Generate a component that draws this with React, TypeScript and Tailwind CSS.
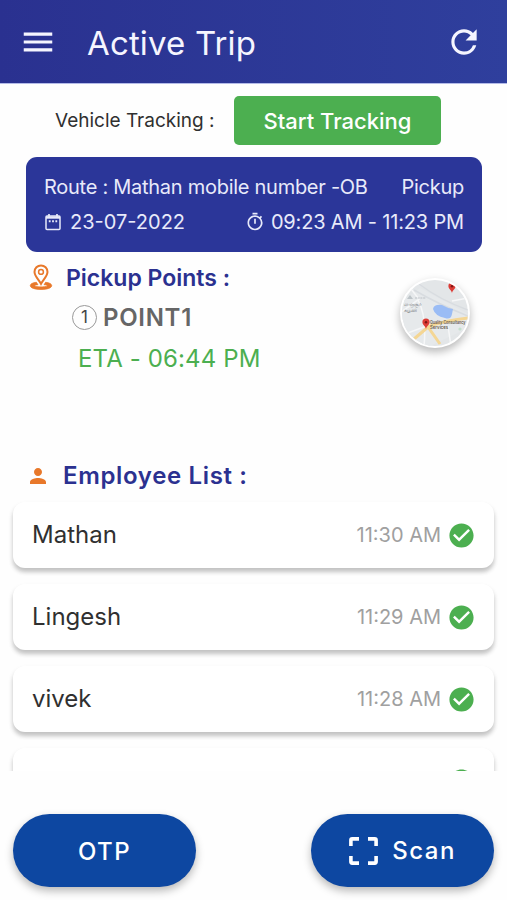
import React from "react";
import { MdCheckCircle, MdMenu, MdOutlineTimer, MdPerson, MdRefresh } from "react-icons/md";

interface Employee {
  name: string;
  time: string;
}

const employees: Employee[] = [
  { name: "Mathan", time: "11:30 AM" },
  { name: "Lingesh", time: "11:29 AM" },
  { name: "vivek", time: "11:28 AM" },
  { name: "", time: "" },
];

function CalendarIcon() {
  return (
    <svg className="h-[18px] w-[16px] shrink-0" viewBox="0 0 16 18" fill="none" stroke="currentColor">
      <rect x="1" y="3" width="14" height="13.5" rx="1" strokeWidth="1.5" />
      <path d="M1 4.5h14" strokeWidth="2.4" />
      <path d="M4 1v3M12 1v3" strokeWidth="1.7" />
      <path d="M3.8 8.2h1.8M7.1 8.2h1.8M10.4 8.2h1.8" strokeWidth="2" />
    </svg>
  );
}

function PinIcon() {
  return (
    <svg className="h-[27px] w-[24px] shrink-0" viewBox="0 0 24 27" fill="none" stroke="#e8782a">
      <path d="M12 19.8C10 15.8 5.5 12 5.5 7.9a6.5 6.5 0 0 1 13 0C18.5 12 14 15.8 12 19.8Z" strokeWidth="2" />
      <circle cx="12" cy="7.9" r="2.4" strokeWidth="1.5" />
      <path d="M7.4 18.3C3.9 18.8 1.3 19.8 1.3 21.7c0 2.3 4.8 3.7 10.7 3.7s10.7-1.4 10.7-3.7c0-1.9-2.6-2.9-6.1-3.4l-1.5 2.4c2 .1 3.2.5 3.2 1 0 .7-2.8 1.2-6.3 1.2s-6.3-.5-6.3-1.2c0-.5 1.2-.9 3.2-1Z" fill="#e8782a" strokeWidth="0.8" />
    </svg>
  );
}

function ScanIcon() {
  return (
    <svg className="h-[28px] w-[29px] shrink-0" viewBox="0 0 29 28" fill="none" stroke="white" strokeWidth="3.6">
      <path d="M1.9 9V3.2Q1.9 1.9 3.2 1.9H10M19 1.9h6.8q1.3 0 1.3 1.3V9M27.1 19v5.8q0 1.3-1.3 1.3H19M10 26.1H3.2q-1.3 0-1.3-1.3V19" />
    </svg>
  );
}

function MapPin({ x, y }: { x: number; y: number }) {
  return (
    <g transform={`translate(${x} ${y})`}>
      <path d="M0 0C-.5-3.2-3.6-4-3.6-7a3.6 3.6 0 0 1 7.2 0C3.6-4 .5-3.2 0 0Z" fill="#dc3b35" />
      <circle cy="-6.8" r="1.2" fill="#7d1512" />
    </g>
  );
}

function MapThumbnail() {
  return (
    <button
      type="button"
      aria-label="Open map"
      className="h-[70px] w-[70px] shrink-0 overflow-hidden rounded-full border-[2px] border-white bg-white shadow-[0_4px_8px_rgba(0,0,0,0.28)]"
    >
      <svg className="h-full w-full" viewBox="0 0 66 66">
        <rect width="66" height="66" fill="#e3e6e8" />
        <path d="M0 22 18 8 66 34v14L28 66H0Z" fill="#e6e9eb" />
        <path d="M17 4Q38 20 66 30M12 10Q36 24 66 36" stroke="#d8dce0" strokeWidth="1.5" fill="none" />
        <path d="M-2 33 17 19 9 9M16 20Q25 37 22 66M22 47 0 55M46 46 49 66M50 21 66 18" stroke="#f6f7f8" strokeWidth="1.5" fill="none" />
        <path d="M31 29q1-5 9-4 5 3 11 4l-1 5q-1 6-7 4-10-2-12-9Z" fill="#9abcf5" />
        <path d="M12 59 26 47l12 17M26 47Q40 41 66 38" stroke="#f4d694" strokeWidth="3" fill="none" />
        <path d="m5 19 3-4 3 4Z" fill="#bcc3c7" />
        <path d="M13 18h11" stroke="#bcc1c5" strokeWidth="1.2" strokeDasharray="2 .7" />
        <text x="2" y="26" fontSize="4.6" fill="#7b8085">ளஞ்சூர்</text>
        <text x="2" y="32" fontSize="4.6" fill="#666b70">கழனி</text>
        <text x="28" y="44" fontSize="4.3" fontWeight="600" fill="#66594c" textLength="35.5" lengthAdjust="spacingAndGlyphs">Quality Consultancy</text>
        <text x="28" y="49" fontSize="4.3" fontWeight="600" fill="#66594c">Services</text>
        <circle cx="58" cy="49" r="1.6" fill="#c4dfcd" />
        <MapPin x={50} y={13} />
        <MapPin x={24} y={49} />
      </svg>
    </button>
  );
}

function EmployeeCard({ name, time }: Employee) {
  return (
    <div className="flex h-[66px] shrink-0 items-center justify-between rounded-[12px] bg-white pr-[18px] pl-[19px] shadow-[0_4px_4px_rgba(0,0,0,0.2),0_3px_6px_rgba(0,0,0,0.06)]">
      <span className="text-[24px] text-[#303030]">{name}</span>
      <div className="flex items-center gap-[6px]">
        <span className="text-[20px] text-[#a0a0a0]">{time}</span>
        <MdCheckCircle className="h-[29px] w-[29px] text-[#4caf50]" />
      </div>
    </div>
  );
}

export default function App() {
  return (
    <div className="flex h-[900px] w-[507px] flex-col overflow-hidden bg-[#fefefe] font-['Inter','Noto_Sans',sans-serif] leading-none">
      <header className="flex h-[84px] shrink-0 items-center border-b border-[#b4bbe8] bg-linear-to-r from-[#2a3190] to-[#2f3f9d] pr-[24px] pl-[19px] text-[#f5f5ff]">
        <MdMenu className="h-[38px] w-[38px]" />
        <h1 className="ml-[30px] pt-[4px] text-[33px] tracking-[0.15px]">Active Trip</h1>
        <MdRefresh className="ml-auto h-[38px] w-[38px]" />
      </header>

      <div className="mt-[12px] flex h-[49px] shrink-0 items-center pl-[55px]">
        <span className="w-[179px] text-[19px] whitespace-nowrap text-[#303030]">Vehicle Tracking :</span>
        <button type="button" className="h-[49px] w-[207px] rounded-[5px] bg-[#4caf50] text-[22px] font-medium text-white">
          Start Tracking
        </button>
      </div>

      <section className="mr-[25px] ml-[26px] mt-[12px] flex h-[95px] shrink-0 flex-col justify-center gap-[15px] rounded-[11px] bg-[#2b3699] pr-[18px] pl-[18px] text-[20px] text-[#e8eafa]">
        <div className="flex justify-between whitespace-nowrap">
          <span className="tracking-[-0.27px]">Route : Mathan mobile number -OB</span>
          <span className="tracking-[-0.27px]">Pickup</span>
        </div>
        <div className="flex items-center justify-between whitespace-nowrap">
          <div className="flex items-center gap-[9px] pl-[1px]">
            <CalendarIcon />
            <span>23-07-2022</span>
          </div>
          <div className="flex items-center gap-[6px]">
            <MdOutlineTimer className="h-[20px] w-[20px]" />
            <span className="tracking-[-0.17px]">09:23 AM - 11:23 PM</span>
          </div>
        </div>
      </section>

      <section className="mt-[12px] flex h-[194px] shrink-0 items-start justify-between pr-[37px] pl-[29px]">
        <div>
          <div className="flex h-[27px] items-center gap-[13px]">
            <PinIcon />
            <h2 className="pt-[2px] text-[23px] font-semibold text-[#2b3190]">Pickup Points :</h2>
          </div>
          <div className="mt-[14px] ml-[43px] flex items-center gap-[6px]">
            <span className="flex h-[25px] w-[25px] items-center justify-center rounded-full border border-[#999] text-[17px] text-[#444]">
              1
            </span>
            <span className="text-[24px] font-semibold tracking-[0.7px] text-[#666]">POINT1</span>
          </div>
          <p className="mt-[17px] ml-[49px] text-[24px] tracking-[0.13px] text-[#4caf50]">ETA - 06:44 PM</p>
        </div>
        <div className="mt-[14px]">
          <MapThumbnail />
        </div>
      </section>

      <section className="flex h-[313px] shrink-0 flex-col overflow-hidden">
        <div className="mt-[4px] flex h-[28px] shrink-0 items-center gap-[13px] pl-[26px]">
          <MdPerson className="h-[24px] w-[24px] text-[#e8782a]" />
          <h2 className="text-[24px] font-semibold tracking-[0.65px] text-[#2b3190]">Employee List :</h2>
        </div>
        <div className="mt-[12px] flex flex-col gap-[16px] px-[13px]">
          {employees.map((employee, index) => (
            <EmployeeCard key={index} {...employee} />
          ))}
        </div>
      </section>

      <footer className="mt-[43px] flex shrink-0 justify-between px-[13px] text-[24px] font-medium text-white">
        <button type="button" className="h-[73px] w-[183px] rounded-full bg-[#0d47a1] pt-[2px] tracking-[1.5px] shadow-[0_4px_8px_rgba(0,0,0,0.28)]">
          OTP
        </button>
        <button
          type="button"
          className="flex h-[73px] w-[183px] items-center justify-center gap-[14px] rounded-full bg-[#0d47a1] tracking-[1.5px] shadow-[0_4px_8px_rgba(0,0,0,0.28)]"
        >
          <ScanIcon />
          <span className="pt-[1px]">Scan</span>
        </button>
      </footer>
    </div>
  );
}
